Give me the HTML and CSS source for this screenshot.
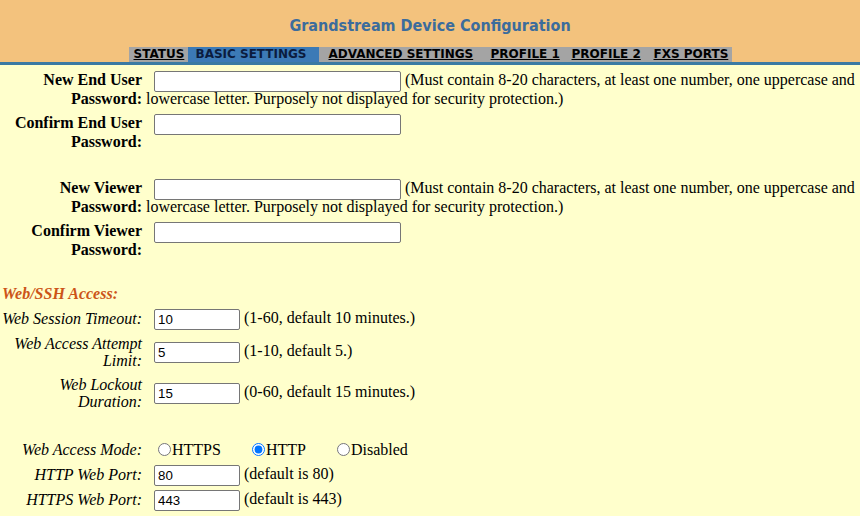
FILE: index.html
```html
<!DOCTYPE html>
<html>
<head>
<meta charset="utf-8">
<title>Grandstream Device Configuration</title>
<link rel="stylesheet" href="styles.css">
</head>
<body>
<header class="top">
  <h1 class="title">Grandstream Device Configuration</h1>
  <nav class="tabs">
    <a class="tab tab-status" href="#">STATUS</a>
    <a class="tab tab-active" href="#">BASIC SETTINGS</a>
    <a class="tab tab-adv" href="#">ADVANCED SETTINGS</a>
    <a class="tab tab-p1" href="#">PROFILE 1</a>
    <a class="tab tab-p2" href="#">PROFILE 2</a>
    <a class="tab tab-fxs" href="#">FXS PORTS</a>
  </nav>
</header>
<main class="form">
  <div class="row row-b">
    <div class="label strong">New End User Password:</div>
    <div class="value"><input class="field field-wide" type="password"> (Must contain 8-20 characters, at least one number, one uppercase and lowercase letter. Purposely not displayed for security protection.)</div>
  </div>
  <div class="row row-b">
    <div class="label strong">Confirm End User Password:</div>
    <div class="value"><input class="field field-wide" type="password"></div>
  </div>
  <div class="spacer spacer-a"></div>
  <div class="row row-b">
    <div class="label strong">New Viewer Password:</div>
    <div class="value"><input class="field field-wide" type="password"> (Must contain 8-20 characters, at least one number, one uppercase and lowercase letter. Purposely not displayed for security protection.)</div>
  </div>
  <div class="row row-b">
    <div class="label strong">Confirm Viewer Password:</div>
    <div class="value"><input class="field field-wide" type="password"></div>
  </div>
  <div class="spacer spacer-b"></div>
  <div class="section">Web/SSH Access:</div>
  <div class="row row-i">
    <div class="label ital">Web Session Timeout:</div>
    <div class="value"><input class="field field-small" type="text" value="10"> (1-60, default 10 minutes.)</div>
  </div>
  <div class="row row-i row-tall">
    <div class="label ital">Web Access Attempt Limit:</div>
    <div class="value"><input class="field field-small" type="text" value="5"> (1-10, default 5.)</div>
  </div>
  <div class="row row-i row-tall">
    <div class="label ital">Web Lockout Duration:</div>
    <div class="value"><input class="field field-small" type="text" value="15"> (0-60, default 15 minutes.)</div>
  </div>
  <div class="spacer spacer-c"></div>
  <div class="row row-i">
    <div class="label ital">Web Access Mode:</div>
    <div class="value radios">
      <label class="opt"><input type="radio" name="mode">HTTPS</label>
      <label class="opt"><input type="radio" name="mode" checked>HTTP</label>
      <label class="opt"><input type="radio" name="mode">Disabled</label>
    </div>
  </div>
  <div class="row row-i">
    <div class="label ital">HTTP Web Port:</div>
    <div class="value"><input class="field field-small" type="text" value="80"> (default is 80)</div>
  </div>
  <div class="row row-i">
    <div class="label ital">HTTPS Web Port:</div>
    <div class="value"><input class="field field-small" type="text" value="443"> (default is 443)</div>
  </div>
</main>
</body>
</html>
```
FILE: styles.css
```css
html, body {
  margin: 0;
  padding: 0;
  background: #ffffcc;
}
body {
  font-family: "Liberation Serif", "Times New Roman", serif;
  font-size: 16px;
  color: #000;
}

/* header */
.top {
  background: #f3c27d;
  border-bottom: 3px solid #3b7aa3;
  display: flex;
  flex-direction: column;
  align-items: center;
}
.title {
  margin: 0;
  height: 47px;
  padding-top: 16px;
  box-sizing: border-box;
  font-family: "DejaVu Sans Condensed", "DejaVu Sans", sans-serif;
  font-weight: bold;
  font-size: 16px;
  line-height: 20px;
  color: #3c6c9c;
}
.tabs {
  display: flex;
  height: 15px;
}
.tab {
  display: block;
  box-sizing: border-box;
  overflow: hidden;
  white-space: nowrap;
  background: #a4a4a4;
  color: #000;
  font-family: "DejaVu Sans", sans-serif;
  font-weight: bold;
  font-size: 12px;
  line-height: 15px;
  text-decoration: underline;
}
.tab-status { width: 59px; padding-left: 5px; }
.tab-active {
  width: 131px;
  padding-left: 8px;
  background: #3c7ab6;
  color: #0b1c3e;
  text-decoration: none;
}
.tab-adv { width: 164px; padding-left: 10px; }
.tab-p1 { width: 81px; padding-left: 8px; }
.tab-p2 { width: 83px; padding-left: 8px; }
.tab-fxs { width: 85px; padding-left: 7px; }

/* form */
.form {
  display: flex;
  flex-direction: column;
  padding-top: 6px;
}
.row {
  display: grid;
  grid-template-columns: 142px 1fr;
  column-gap: 4px;
}
.row-b {
  min-height: 43px;
  align-items: start;
  line-height: 18.5px;
}
.row-i {
  height: 25px;
  align-items: center;
  line-height: 17px;
}
.row-tall {
  height: 41px;
}
.label {
  text-align: right;
}
.strong { font-weight: bold; }
.ital { font-style: italic; }
.field {
  margin: -2px 0 -2px 8px;
  height: 21px;
  box-sizing: border-box;
  border: 1px solid #767676;
  border-radius: 2px;
  background: #fff;
  font-family: "Liberation Sans", Arial, sans-serif;
  font-size: 13.3px;
  padding: 1px 3px;
  vertical-align: middle;
}
.field-wide { width: 247px; }
.field-small { width: 86px; }

.spacer-a { height: 22px; }
.spacer-b { height: 20px; }
.spacer-c { height: 24px; }

.section {
  color: #cc5418;
  font-weight: bold;
  font-style: italic;
  padding-left: 2px;
  line-height: 18px;
  margin-bottom: 3px;
}
.radios {
  display: flex;
  align-items: center;
  padding-left: 9px;
}
.opt {
  display: inline-flex;
  align-items: center;
  margin-right: 28px;
}
.opt input {
  margin: 0 1px 0 3px;
  width: 13px;
  height: 13px;
}
```
